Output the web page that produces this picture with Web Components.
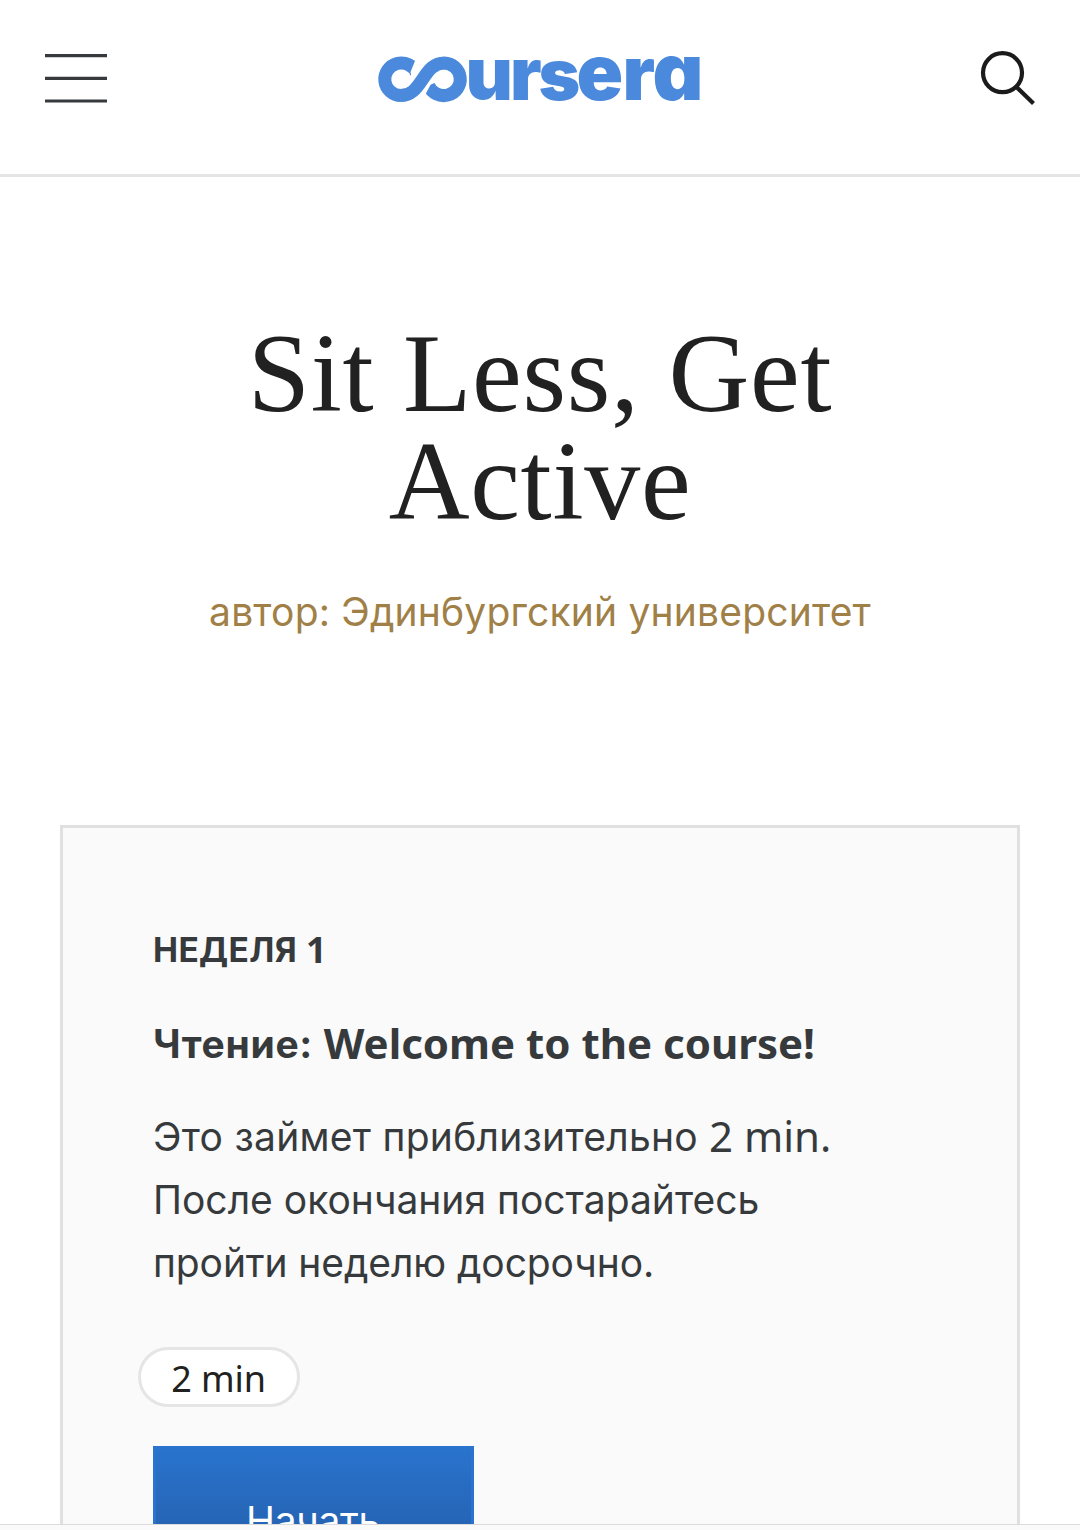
<!DOCTYPE html>
<html lang="ru">
<head>
<meta charset="utf-8">
<title>Sit Less, Get Active</title>
<style>
html, body { margin: 0; height: 1530px; overflow: hidden; background: #fff; }
</style>
</head>
<body>
<course-app></course-app>
<script>
const define = (name, html) => {
  const template = document.createElement('template');
  template.innerHTML = html;
  customElements.define(name, class extends HTMLElement {
    constructor() {
      super();
      this.attachShadow({ mode: 'open' }).append(template.content.cloneNode(true));
    }
  });
};

define('menu-icon', `
<style>:host{display:block;width:62px;height:50px} svg{display:block}</style>
<svg width="62" height="50" viewBox="0 0 62 50"><path d="M0 1.6H62M0 24.3H62M0 47H62" stroke="#373a3c" stroke-width="3.2"/></svg>`);

define('search-icon', `
<style>:host{display:block;width:56px;height:56px} svg{display:block}</style>
<svg width="56" height="56" viewBox="0 0 56 56" fill="none" stroke="#1b1b1b" stroke-width="4.2"><circle cx="22.5" cy="22.7" r="19.5"/><path d="M36.5 37L53.5 53.5"/></svg>`);

define('brand-logo', `
<style>:host{display:block;width:326px;height:50px} svg{display:block;overflow:visible}
text{font:900 73px Inter,sans-serif;font-feature-settings:"cv11";fill:#4a89dc}
.s{font-size:71px}.e{font-size:77px}.r{font-size:75px}.a{font-size:79px}</style>
<svg width="326" height="50" viewBox="376 54 326 50" role="img" aria-label="coursera">
<g fill="none" stroke="#4a89dc" stroke-width="13">
<path d="M416.5 73A16.5 16.3 0 1 0 401 95.6"/>
<path d="M444 63A16.5 16.3 0 1 1 428.5 85.5"/>
</g>
<path d="M417 56L410.500 72L413 84H428V57ZM424 97L431.500 83L430 74H418L417 97Z" fill="#fff"/>
<path d="M400.500 95.600C411 95.600 416 89 422.500 79.300C429 69.500 434 63 444.500 63" fill="none" stroke="#4a89dc" stroke-width="13"/>
<text y="99.5" x="465.5 510">ur<tspan class="s" x="538.5">s</tspan><tspan class="e" x="576.5">e</tspan><tspan class="r" x="622.5">r</tspan><tspan class="a" x="652.5">a</tspan></text>
</svg>`);

define('app-header', `
<style>:host{display:flex;box-sizing:border-box;height:177px;flex:none;border-bottom:3px solid #e5e5e5;padding:0 45px;justify-content:space-between;align-items:flex-start}
menu-icon{margin-top:54px} brand-logo{margin-top:54px;margin-left:-9px} search-icon{margin-top:50px;margin-right:-1px}</style>
<menu-icon></menu-icon><brand-logo></brand-logo><search-icon></search-icon>`);

define('course-title', `
<style>:host{display:block;text-align:center;padding-top:142px}
h1{margin:0;font:400 112px/108px "Liberation Serif",serif;color:#212121;letter-spacing:.7px}
p{margin:0;padding-top:45px;font:400 39px/63px Inter,sans-serif;letter-spacing:.18px;color:#a08046}</style>
<h1><slot></slot></h1><p><slot name="author"></slot></p>`);

define('time-pill', `
<style>:host{display:flex;box-sizing:border-box;width:162px;height:60px;border:3px solid #e5e5e5;border-radius:30px;background:#fff;justify-content:center;align-items:center;font:400 36px/54px "Noto Sans",sans-serif;color:#212121}
span{padding:4px 1px 0 0;letter-spacing:-.1px}</style>
<span><slot></slot></span>`);

define('primary-button', `
<style>:host{display:block;width:321px}
button{display:block;width:100%;height:150px;border:3px solid #2a74d0;border-radius:0;background:linear-gradient(#2973cd,#2458a0);color:#fff;font:400 39px/144px Inter,sans-serif;letter-spacing:-.3px;padding:0 1px 0 0}</style>
<button><slot></slot></button>`);

define('week-card', `
<style>:host{display:flex;flex-direction:column;box-sizing:border-box;margin:182px 60px 0;height:900px;border:3px solid #e0e0e0;background:#fafafa;color:#373a3c;padding:91px 90px 0}
h2,h3,p{white-space:nowrap}
i{font-style:normal}
b,p span{vertical-align:-1px}
h2{margin:0;font:700 33.5px/63px Inter,sans-serif} h2 i{letter-spacing:.35px} h2 b{font:700 36px "Noto Sans";margin-left:1px}
h3{margin:30px 0 0;font:700 39px/63px Inter,sans-serif} h3 i{letter-spacing:.7px} h3 b{font:700 42px "Noto Sans";margin-left:1.5px}
p{margin:30px 0 0;font:400 39px/63px Inter,sans-serif} p i{letter-spacing:.27px} p .last{letter-spacing:-.1px} p span{font:400 42px "Noto Sans"}
time-pill{margin:53px 0 39px -15px}</style>
<h2><i>НЕДЕЛЯ</i> <b>1</b></h2>
<h3><i>Чтение:</i> <b>Welcome to the course!</b></h3>
<p><i>Это займет приблизительно</i> <span>2 min.</span><br>После окончания постарайтесь<br><i class="last">пройти неделю досрочно.</i></p>
<time-pill>2 min</time-pill>
<primary-button>Начать</primary-button>`);

define('bottom-bar', `<style>:host{display:block;flex:none;box-sizing:border-box;height:6px;border-top:1px solid #dcdcdc;background:#fafafa}</style>`);

define('course-app', `
<style>:host{display:flex;flex-direction:column;width:1080px;height:1530px;overflow:hidden}
main{flex:1;min-height:0;overflow:hidden}</style>
<main><app-header></app-header>
<course-title>Sit Less, Get<br>Active<span slot="author">автор: Эдинбургский университет</span></course-title>
<week-card></week-card></main><bottom-bar></bottom-bar>`);
</script>
</body>
</html>
